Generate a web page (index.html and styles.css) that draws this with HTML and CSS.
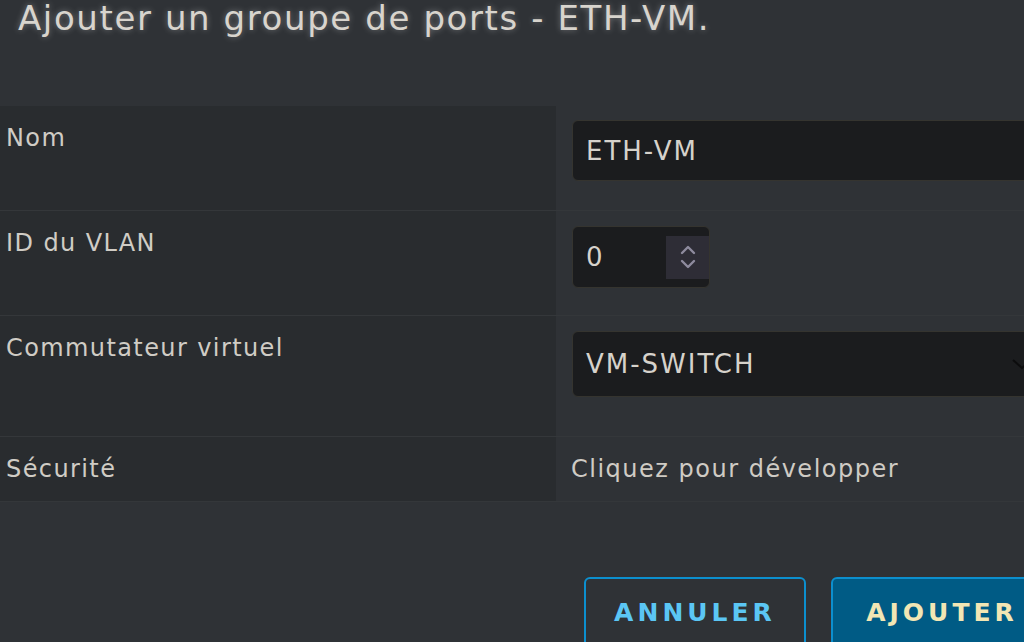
FILE: index.html
```html
<!DOCTYPE html>
<html lang="fr">

<head>
    <meta charset="UTF-8">
    <meta name="viewport" content="width=device-width, initial-scale=1.0">
    <title>Ajouter un groupe de ports</title>
    <link rel="stylesheet" href="styles.css">
</head>

<body>
    <div class="dialog">
        <h1 class="dialog-title">Ajouter un groupe de ports - ETH-VM.</h1>

        <div class="form">
            <!-- Nom -->
            <div class="form-row row-name">
                <div class="form-label">Nom</div>
                <div class="form-value">
                    <div class="text-input">ETH-VM</div>
                </div>
            </div>

            <!-- VLAN -->
            <div class="form-row row-vlan">
                <div class="form-label">ID du VLAN</div>
                <div class="form-value">
                    <div class="number-input">
                        <span class="number-text">0</span>
                        <span class="spinner">
                            <svg width="18" height="32" viewBox="0 0 18 32">
                                <path d="M3 12 L9 6 L15 12" fill="none" stroke="#8e8b9e" stroke-width="2.4" stroke-linecap="round" stroke-linejoin="round" />
                                <path d="M3 20 L9 26 L15 20" fill="none" stroke="#8e8b9e" stroke-width="2.4" stroke-linecap="round" stroke-linejoin="round" />
                            </svg>
                        </span>
                    </div>
                </div>
            </div>

            <!-- Commutateur -->
            <div class="form-row row-switch">
                <div class="form-label">Commutateur virtuel</div>
                <div class="form-value">
                    <div class="select-input">
                        <span>VM-SWITCH</span>
                        <svg class="select-caret" width="22" height="14" viewBox="0 0 22 14">
                            <path d="M2 3 L11 11 L20 3" fill="none" stroke="#0c0c0d" stroke-width="2" />
                        </svg>
                    </div>
                </div>
            </div>

            <!-- Securite -->
            <div class="form-row row-security">
                <div class="form-label">Sécurité</div>
                <div class="form-value">
                    <span class="expand-link">Cliquez pour développer</span>
                </div>
            </div>
        </div>

        <div class="dialog-footer">
            <button class="btn btn-outline">ANNULER</button>
            <button class="btn btn-primary">AJOUTER</button>
        </div>
    </div>
</body>

</html>
```

FILE: styles.css
```css
body {
    margin: 0;
    padding: 0;
    background: #2f3236;
    color: #d0ccc5;
    font-family: "DejaVu Sans", sans-serif;
    overflow: hidden;
}

.dialog {
    width: 1024px;
    height: 642px;
}

.dialog-title {
    margin: 0 0 70px 0;
    padding-left: 18px;
    font-size: 34px;
    font-weight: normal;
    line-height: 36px;
    letter-spacing: 1.6px;
    color: #d8d4cd;
    text-shadow: 0 0 6px rgba(255, 255, 255, 0.35);
    white-space: nowrap;
}

.form-row {
    display: flex;
    border-bottom: 1px solid #34373a;
}

.form-label {
    width: 556px;
    flex-shrink: 0;
    box-sizing: border-box;
    padding: 16px 0 0 6px;
    background: #292c2f;
    font-size: 24px;
    line-height: 32px;
    letter-spacing: 1.4px;
}

.form-value {
    flex: 1;
    padding-left: 16px;
    overflow: hidden;
}

.row-name {
    height: 104px;
}

.row-name .form-value {
    padding-top: 14px;
}

.row-vlan {
    height: 104px;
}

.row-vlan .form-value {
    padding-top: 15px;
}

.row-switch {
    height: 120px;
}

.row-switch .form-value {
    padding-top: 15px;
}

.row-security {
    height: 64px;
}

.row-security .form-value {
    padding-top: 16px;
    padding-left: 15px;
}

.text-input,
.number-input,
.select-input {
    box-sizing: border-box;
    background: #1b1c1e;
    border: 1px solid #35342f;
    border-radius: 6px;
    font-size: 26px;
    letter-spacing: 2px;
    color: #d6d2cb;
    display: flex;
    align-items: center;
}

.text-input {
    width: 480px;
    height: 61px;
    padding-left: 13px;
}

.number-input {
    width: 138px;
    height: 62px;
    padding-left: 13px;
    justify-content: space-between;
}

.spinner {
    width: 43px;
    height: 43px;
    background: #2e2d36;
    display: flex;
    align-items: center;
    justify-content: center;
}

.spinner svg {
    display: block;
}

.select-input {
    width: 470px;
    height: 66px;
    padding: 0 0 0 13px;
    justify-content: space-between;
}

.select-caret {
    margin-right: 8px;
}

.expand-link {
    font-size: 24px;
    line-height: 32px;
    letter-spacing: 1.5px;
    color: #cfcbc4;
}

.dialog-footer {
    display: flex;
    gap: 25px;
    padding: 75px 0 0 584px;
}

.btn {
    flex-shrink: 0;
    width: 222px;
    height: 80px;
    box-sizing: border-box;
    border: 2px solid #0c8fce;
    border-radius: 6px;
    font-family: "DejaVu Sans", sans-serif;
    font-size: 25px;
    font-weight: bold;
    letter-spacing: 4px;
    padding: 0 0 10px 0;
}

.btn-outline {
    background: transparent;
    color: #5bc6f4;
}

.btn-primary {
    background: #005b85;
    color: #f2e6b4;
}
```
